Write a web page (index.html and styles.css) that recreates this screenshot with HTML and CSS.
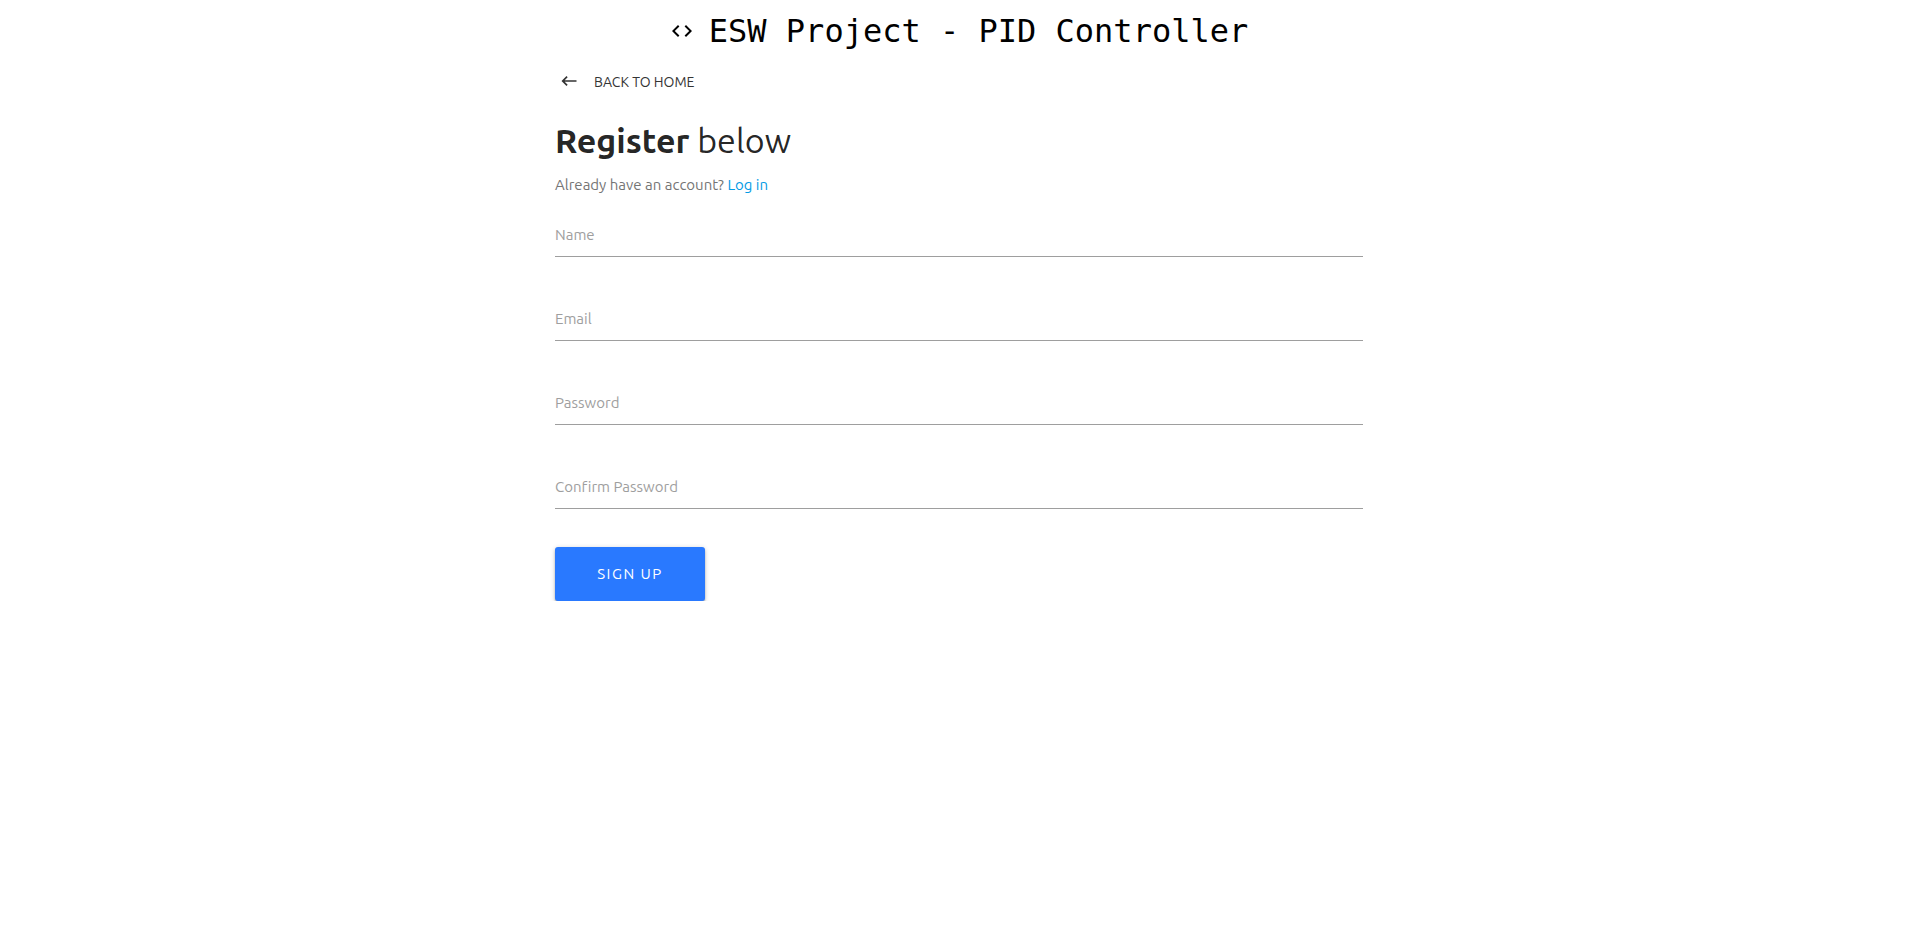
FILE: index.html
```html
<!DOCTYPE html>
<html lang="en">
<head>
<meta charset="utf-8">
<title>ESW Project - PID Controller</title>
<link rel="stylesheet" href="styles.css">
</head>
<body>
<nav class="navbar">
  <a class="brand" href="#">
    <svg class="icon" viewBox="0 0 24 24" aria-hidden="true"><path d="M9.4 16.6 4.8 12l4.6-4.6L8 6l-6 6 6 6 1.4-1.4zm5.2 0 4.6-4.6-4.6-4.6L16 6l6 6-6 6-1.4-1.4z"/></svg>
    <span>ESW Project - PID Controller</span>
  </a>
</nav>
<main class="container">
  <a class="back" href="#">
    <svg class="back-icon" viewBox="0 0 24 24" aria-hidden="true"><path d="M21 11H6.83l3.58-3.59L9 6l-6 6 6 6 1.41-1.41L6.83 13H21z"/></svg>
    <span>BACK TO HOME</span>
  </a>
  <h1 class="title"><b>Register</b> below</h1>
  <p class="hint">Already have an account? <a class="login" href="#">Log in</a></p>
  <form class="form">
    <div class="field"><input class="input" id="name" type="text" placeholder=" "><label class="label" for="name">Name</label></div>
    <div class="field"><input class="input" id="email" type="email" placeholder=" "><label class="label" for="email">Email</label></div>
    <div class="field"><input class="input" id="password" type="password" placeholder=" "><label class="label" for="password">Password</label></div>
    <div class="field"><input class="input" id="password2" type="password" placeholder=" "><label class="label" for="password2">Confirm Password</label></div>
    <button class="submit" type="submit">SIGN UP</button>
  </form>
</main>
</body>
</html>
```
FILE: styles.css
```css
* { box-sizing: border-box; }
body {
  margin: 0;
  background: #fff;
  color: rgba(0, 0, 0, 0.87);
  font: 15px/22px Ubuntu, "Noto Sans", sans-serif;
  font-variant-ligatures: none;
}
a { text-decoration: none; }
.navbar {
  display: flex;
  justify-content: center;
  height: 64px;
}
.brand {
  display: flex;
  align-items: center;
  gap: 15px;
  height: 62px;
  color: #000;
  font: 32px/60px "DejaVu Sans Mono", monospace;
}
.icon { width: 24px; height: 24px; fill: currentColor; }
.container {
  width: 70%;
  max-width: 808px;
  margin: 0 auto;
}
.back {
  display: inline-flex;
  align-items: center;
  gap: 15px;
  height: 36px;
  padding: 0 4px;
  color: #343434;
  font-size: 14px;
}
.back-icon { width: 20px; height: 20px; margin-bottom: 2px; fill: currentColor; }
.title {
  margin: 20px 0 14px;
  font-size: 34px;
  line-height: 40px;
  font-weight: 400;
}
.title b { font-weight: 700; }
.hint { margin: 0; color: #757575; }
.login { color: #039be5; }
.form { display: flex; flex-direction: column; align-items: flex-start; }
.field { position: relative; width: 100%; margin: 16px 0 23px; }
.input {
  display: block;
  width: 100%;
  height: 45px;
  padding: 0;
  border: 0;
  border-bottom: 1px solid #9e9e9e;
  outline: 0;
  background: transparent;
  font: inherit;
}
.label { position: absolute; left: 0; top: 12px; color: #9e9e9e; pointer-events: none; }
.input:focus + .label, .input:not(:placeholder-shown) + .label { top: -10px; font-size: 12px; }
.submit {
  width: 150px;
  height: 54px;
  margin-top: 15px;
  border: 0;
  border-radius: 3px;
  background: #2979ff;
  color: #fff;
  font: inherit;
  letter-spacing: 1.5px;
  box-shadow: 0 2px 2px 0 rgba(0, 0, 0, 0.24), 0 3px 1px -2px rgba(0, 0, 0, 0.12), 0 1px 5px 0 rgba(0, 0, 0, 0.2);
}
```
